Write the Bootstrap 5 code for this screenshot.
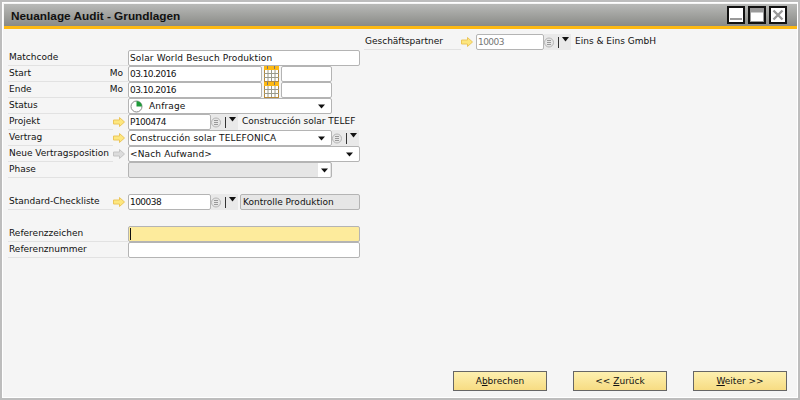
<!DOCTYPE html>
<html lang="de">
<head>
  <meta charset="UTF-8" />
  <meta name="viewport" content="width=device-width, initial-scale=1.0" />
  <title>Neuanlage Audit - Grundlagen</title>
  <link href="https://cdn.jsdelivr.net/npm/bootstrap@5.3.0/dist/css/bootstrap.min.css" rel="stylesheet" />
  <style>
    html, body { width: 800px; height: 400px; overflow: hidden; background: #fff; }
    body { font-family: "DejaVu Sans", Verdana, sans-serif; font-size: 9px; color: #111; line-height: 14px; }
    .fenster { width: 800px; height: 400px; background: #f5f5f5; box-shadow: inset 0 0 0 2px #bdbdbd, inset 0 0 0 3px #fff; padding: 4px 3px 3px 4px; }
    .titel { height: 25px; background: linear-gradient(#b9bab8, #898a86); border-bottom: 3px solid #fdb913; padding: 0 10px 0 7px; }
    .titel-text { font-family: "Liberation Sans", Arial, sans-serif; font-weight: 700; font-size: 11.8px; color: #101010; padding-top: 1px; }
    .fenster-btn { width: 18px; height: 18px; border: 2px solid #111; background: #fff; display: block; }
    .fenster-gap { gap: 3px; }
    .inhalt { padding: 5px 0 0 4px; }
    .zeile { height: 16px; }
    .zeile-gross { margin-top: 16px; }
    .beschr { width: 120px; height: 16px; border-bottom: 1px solid #e2e2e2; padding-left: 1px; white-space: nowrap; flex: none; }
    .beschr-pfeil { width: 105px; }
    .beschr-partner { width: 97px; margin-left: 356px; }
    .pfeil-ic { width: 12px; height: 10px; margin: 3px 3px 0 0; flex: none; }
    .feld { height: 16px; border: 1px solid #b4b4b4; border-radius: 2px; background: #fff; padding: 0 2px 0 1px; white-space: nowrap; overflow: hidden; letter-spacing: .14px; flex: none; }
    .ziffern { letter-spacing: -.55px; }
    .b-231 { width: 232px; } .b-203 { width: 204px; } .b-134 { width: 134px; } .b-82 { width: 83px; } .b-51 { width: 51px; } .b-68 { width: 68px; } .b-120 { width: 120px; }
    .feld-grau { background: #e6e6e6; letter-spacing: 0; }
    .feld-gelb { background: #fdeb9c; }
    .feld-grautext { color: #777; }
    .suche { width: 27px; height: 16px; background: #e9e9e9; flex: none; }
    .zusatz { padding-left: 4px; white-space: nowrap; }
    .mo { margin-right: 5px; }
    .kal-ic { width: 15px; height: 16px; margin: 0 2px; flex: none; }
    .dreieck-ic { width: 7px; height: 5px; margin-right: 4px; }
    .dreieck-feld { width: 12px; height: 14px; margin-right: -1px; background: #fff; }
    .dreieck-feld .dreieck-ic { margin-right: 0; }
    .anfrage { gap: 6px; }
    .kontrolle { margin-left: 2px; padding-left: 2px; }
    .cursor { width: 1px; height: 12px; background: #111; margin-top: 1px; }
    .knopf { width: 94px; height: 20px; padding: 0; border: 1px solid #666; border-radius: 0; background: linear-gradient(#fdf0b0, #f7dc83); color: #111; font-family: inherit; font-size: 9px; line-height: 17px; }
    .knopf:hover { background: #f7dc83; color: #111; border-color: #666; }
    .fuss { width: 793px; padding-top: 113px; padding-right: 10px; gap: 26px; }
  </style>
</head>
<body>
  <svg width="0" height="0" class="position-absolute">
    <symbol id="pfeil" viewBox="0 0 12 10"><path d="M0.5 3H6.5V0.5L11.5 5L6.5 9.5V7H0.5Z" fill="#fde77f" stroke="#ecc65a" stroke-width="1"/></symbol>
    <symbol id="pfeil-grau" viewBox="0 0 12 10"><path d="M0.5 3H6.5V0.5L11.5 5L6.5 9.5V7H0.5Z" fill="#dcdcdc" stroke="#c4c4c4" stroke-width="1"/></symbol>
    <symbol id="lupe" viewBox="0 0 27 16">
      <circle cx="5" cy="8.5" r="4.5" fill="#e6e6e6" stroke="#b4b4b4"/>
      <path d="M3 6.5h4M3 8.5h4M3 10.5h4" stroke="#999"/>
      <path d="M14.5 3v11" stroke="#333"/>
      <path d="M18 3h7l-3.5 4.5z" fill="#111"/>
    </symbol>
    <symbol id="kal" viewBox="0 0 15 16">
      <rect x="0.5" y="0.5" width="14" height="15" fill="#fff" stroke="#b5893a"/>
      <rect x="0" y="0" width="15" height="4" fill="#fdb913"/>
      <path d="M3.5 0v3M10.5 0v3" stroke="#777"/>
      <path d="M0 7.5h15M0 11.5h15M4 4v11M7.5 4v11M11 4v11" stroke="#9a9a8a"/>
    </symbol>
    <symbol id="dreieck" viewBox="0 0 10 6"><path d="M0 0h10L5 6z" fill="#111"/></symbol>
  </svg>

  <div class="fenster d-flex flex-column">
    <div class="titel d-flex align-items-center justify-content-between">
      <span class="titel-text">Neuanlage Audit - Grundlagen</span>
      <div class="d-flex fenster-gap">
        <svg class="fenster-btn" viewBox="0 0 14 14"><rect x="1" y="10" width="12" height="2" fill="#999"/></svg>
        <svg class="fenster-btn" viewBox="0 0 14 14"><rect x="0.5" y="0.5" width="13" height="13" fill="#fff" stroke="#999"/><rect x="0.5" y="0.5" width="13" height="4" fill="#999"/></svg>
        <svg class="fenster-btn" viewBox="0 0 14 14"><path d="M2.5 2.5l9 9M11.5 2.5l-9 9" stroke="#999" stroke-width="2.4"/></svg>
      </div>
    </div>

    <div class="inhalt">
      <div class="zeile d-flex">
        <div class="beschr beschr-pfeil beschr-partner">Geschäftspartner</div>
        <svg class="pfeil-ic"><use href="#pfeil"/></svg>
        <div class="feld feld-grautext ziffern b-68">10003</div>
        <svg class="suche" viewBox="0 0 27 16"><use href="#lupe"/></svg>
        <span class="zusatz">Eins &amp; Eins GmbH</span>
      </div>
      <div class="zeile d-flex">
        <div class="beschr">Matchcode</div>
        <div class="feld b-231">Solar World Besuch Produktion</div>
      </div>
      <div class="zeile d-flex">
        <div class="beschr d-flex justify-content-between"><span>Start</span><span class="mo">Mo</span></div>
        <div class="feld ziffern b-134">03.10.2016</div>
        <svg class="kal-ic"><use href="#kal"/></svg>
        <div class="feld b-51"></div>
      </div>
      <div class="zeile d-flex">
        <div class="beschr d-flex justify-content-between"><span>Ende</span><span class="mo">Mo</span></div>
        <div class="feld ziffern b-134">03.10.2016</div>
        <svg class="kal-ic"><use href="#kal"/></svg>
        <div class="feld b-51"></div>
      </div>
      <div class="zeile d-flex">
        <div class="beschr">Status</div>
        <div class="feld b-203 d-flex align-items-center justify-content-between">
          <span class="d-flex align-items-center anfrage">
            <svg width="13" height="13" viewBox="0 0 13 13"><circle cx="6.5" cy="6.5" r="5.5" fill="#fff" stroke="#888"/><path d="M6.5 6.5V1A5.5 5.5 0 0 1 12 6.5Z" fill="#1f9a3a"/></svg>
            <span>Anfrage</span>
          </span>
          <svg class="dreieck-ic"><use href="#dreieck"/></svg>
        </div>
      </div>
      <div class="zeile d-flex">
        <div class="beschr beschr-pfeil">Projekt</div>
        <svg class="pfeil-ic"><use href="#pfeil"/></svg>
        <div class="feld ziffern b-82">P100474</div>
        <svg class="suche" viewBox="0 0 27 16"><use href="#lupe"/></svg>
        <span class="zusatz">Construcción solar TELEF</span>
      </div>
      <div class="zeile d-flex">
        <div class="beschr beschr-pfeil">Vertrag</div>
        <svg class="pfeil-ic"><use href="#pfeil"/></svg>
        <div class="feld b-203 d-flex align-items-center justify-content-between">
          <span>Construcción solar TELEFONICA</span>
          <svg class="dreieck-ic"><use href="#dreieck"/></svg>
        </div>
        <svg class="suche" viewBox="0 0 27 16"><use href="#lupe"/></svg>
      </div>
      <div class="zeile d-flex">
        <div class="beschr beschr-pfeil">Neue Vertragsposition</div>
        <svg class="pfeil-ic"><use href="#pfeil-grau"/></svg>
        <div class="feld b-231 d-flex align-items-center justify-content-between">
          <span>&lt;Nach Aufwand&gt;</span>
          <svg class="dreieck-ic"><use href="#dreieck"/></svg>
        </div>
      </div>
      <div class="zeile d-flex">
        <div class="beschr">Phase</div>
        <div class="feld feld-grau b-203 d-flex align-items-center justify-content-end">
          <span class="dreieck-feld d-flex align-items-center justify-content-center"><svg class="dreieck-ic"><use href="#dreieck"/></svg></span>
        </div>
      </div>
      <div class="zeile zeile-gross d-flex">
        <div class="beschr beschr-pfeil">Standard-Checkliste</div>
        <svg class="pfeil-ic"><use href="#pfeil"/></svg>
        <div class="feld ziffern b-82">100038</div>
        <svg class="suche" viewBox="0 0 27 16"><use href="#lupe"/></svg>
        <div class="feld feld-grau kontrolle b-120">Kontrolle Produktion</div>
      </div>
      <div class="zeile zeile-gross d-flex">
        <div class="beschr">Referenzzeichen</div>
        <div class="feld feld-gelb b-231"><div class="cursor"></div></div>
      </div>
      <div class="zeile d-flex">
        <div class="beschr">Referenznummer</div>
        <div class="feld b-231"></div>
      </div>
    </div>

    <div class="fuss d-flex justify-content-end">
      <button class="btn knopf" type="button">A<u>b</u>brechen</button>
      <button class="btn knopf" type="button">&lt;&lt; <u>Z</u>urück</button>
      <button class="btn knopf" type="button"><u>W</u>eiter &gt;&gt;</button>
    </div>
  </div>
  <script src="https://cdn.jsdelivr.net/npm/bootstrap@5.3.0/dist/js/bootstrap.bundle.min.js"></script>
</body>
</html>
